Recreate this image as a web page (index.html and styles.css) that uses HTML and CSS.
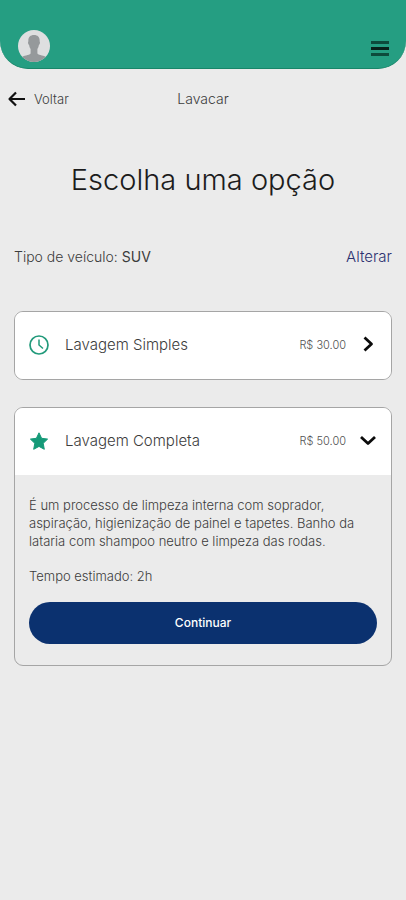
FILE: index.html
```html
<!DOCTYPE html>
<html lang="pt-BR">
<head>
<meta charset="utf-8">
<meta name="viewport" content="width=device-width, initial-scale=1">
<title>Lavacar</title>
<link rel="stylesheet" href="styles.css">
</head>
<body>
<header class="topbar">
  <a class="avatar" href="#" aria-label="Perfil">
    <svg viewBox="0 0 32 32" width="32" height="32" aria-hidden="true">
      <clipPath id="disc"><circle cx="16" cy="16" r="16"/></clipPath>
      <circle cx="16" cy="16" r="16" fill="#dedfe0"/>
      <path clip-path="url(#disc)" fill="#95999b" d="M16 5c-4 0-6 2.600-5.600 6.500-.7.300-.4 2.900.7 3.400.3 2 .9 3.200 1.500 4v4.600C11 25.500 5.500 25 3 28v5h26v-5C26.500 25 21 25.500 19.400 23.500v-4.600c.6-.8 1.200-2 1.500-4 1.100-.5 1.400-3.100.7-3.400C22 7.600 20 5 16 5z"/>
    </svg>
  </a>
  <button class="menu" type="button" aria-label="Menu">
    <svg viewBox="0 0 18 16" width="18" height="16" aria-hidden="true">
      <path d="M0 1h18v3H0zM0 13h18v3H0z" fill="#0d4b3c"/>
      <path d="M0 7h18v3H0z" fill="#08211a"/>
    </svg>
  </button>
</header>
<nav class="nav">
  <a class="back" href="#">
    <svg viewBox="0 0 18 16" width="18" height="16" aria-hidden="true" fill="none" stroke="#111" stroke-width="2.200" stroke-linejoin="round"><path d="M8 1.500 1.500 8 8 14.500M1.500 8H17"/></svg>
    <span>Voltar</span>
  </a>
  <span class="page-name">Lavacar</span>
</nav>
<main class="content">
  <h1 class="title">Escolha uma opção</h1>
  <div class="vehicle">
    <span>Tipo de veículo: <strong>SUV</strong></span>
    <a href="#">Alterar</a>
  </div>
  <section class="card">
    <button class="card-head" type="button" aria-expanded="false">
      <svg class="icon" viewBox="0 0 20 20" width="20" height="20" aria-hidden="true" fill="none" stroke="#229a7b"><circle cx="10" cy="10" r="9" stroke-width="1.700"/><path d="M10 4.500V10l4 3.500" stroke-width="1.500"/></svg>
      <span class="name">Lavagem Simples</span>
      <span class="price">R$ 30.00</span>
      <svg class="chevron" viewBox="0 0 16 16" width="16" height="16" aria-hidden="true" fill="none" stroke="#0b0b0b" stroke-width="2.800" stroke-linejoin="round"><path d="M4.500 0.500 11.500 7 4.500 13.500"/></svg>
    </button>
  </section>
  <section class="card">
    <button class="card-head" type="button" aria-expanded="true" aria-controls="completa">
      <svg class="icon" viewBox="0 0 20 20" width="20" height="20" aria-hidden="true"><path fill="#159a78" stroke="#159a78" stroke-linejoin="round" d="m10 1.800 2.600 5.500 6 .8-4.400 4.200 1.100 6L10 15.400l-5.300 2.900 1.100-6L1.400 8.100l6-.8z"/></svg>
      <span class="name">Lavagem Completa</span>
      <span class="price">R$ 50.00</span>
      <svg class="chevron" viewBox="0 0 16 16" width="16" height="16" aria-hidden="true" fill="none" stroke="#0b0b0b" stroke-width="2.800" stroke-linejoin="round"><path d="M1 4 8 10.500 15 4"/></svg>
    </button>
    <div class="details" id="completa">
      <p>É um processo de limpeza interna com soprador, aspiração, higienização de painel e tapetes. Banho da lataria com shampoo neutro e limpeza das rodas.</p>
      <p>Tempo estimado: 2h</p>
      <button class="continue" type="button">Continuar</button>
    </div>
  </section>
</main>
</body>
</html>
```
FILE: styles.css
```css
* {
  box-sizing: border-box;
}

body {
  margin: 0;
  background: #ebebeb;
  color: #3c3c3c;
  font-family: Inter, "Liberation Sans", sans-serif;
  font-weight: 300;
  font-size: 14px;
  line-height: 20px;
}

a {
  color: inherit;
  text-decoration: none;
}

button {
  font: inherit;
  color: inherit;
  border: 0;
  padding: 0;
  background: none;
  cursor: pointer;
}

svg {
  display: block;
  overflow: visible;
}

.topbar {
  display: flex;
  justify-content: space-between;
  align-items: center;
  padding: 30px 17px 6px 18px;
  border-bottom: 1px solid #188669;
  border-radius: 0 0 28px 28px;
  background: #259e82;
}

.menu {
  padding-top: 4px;
}

.nav {
  display: grid;
  grid-template-columns: 1fr auto 1fr;
  align-items: center;
  padding: 20px 8px 0;
}

.back {
  display: flex;
  align-items: center;
  gap: 8px;
  font-size: 13px;
}

.page-name {
  font-size: 14px;
}

.content {
  padding: 0 14px;
}

.title {
  margin: 51px 0 47px;
  color: #1c1c1c;
  font-size: 29px;
  font-weight: 300;
  line-height: 40px;
  text-align: center;
}

.vehicle {
  display: flex;
  justify-content: space-between;
  margin-bottom: 44px;
}

.vehicle strong {
  font-weight: 400;
}

.vehicle a {
  color: #2b3270;
  font-size: 15px;
}

.card {
  margin-bottom: 27px;
  border: 1px solid #a5a5a5;
  border-radius: 9px;
  overflow: hidden;
}

.card-head {
  display: flex;
  align-items: center;
  width: 100%;
  height: 67px;
  padding: 0 15px 2px 14px;
  background: #fff;
  text-align: left;
}

.name {
  flex: 1;
  margin-left: 16px;
  font-size: 15px;
}

.price {
  margin-right: 14px;
  color: #505050;
  font-size: 11px;
}

.details {
  padding: 21px 14px;
  font-size: 13px;
  line-height: 18px;
}

.details p {
  margin: 0 0 17px;
  padding-right: 14px;
}

.continue {
  display: block;
  width: 100%;
  height: 42px;
  border-radius: 21px;
  background: #0b316f;
  color: #fff;
  font-size: 12px;
  font-weight: 500;
}
```
